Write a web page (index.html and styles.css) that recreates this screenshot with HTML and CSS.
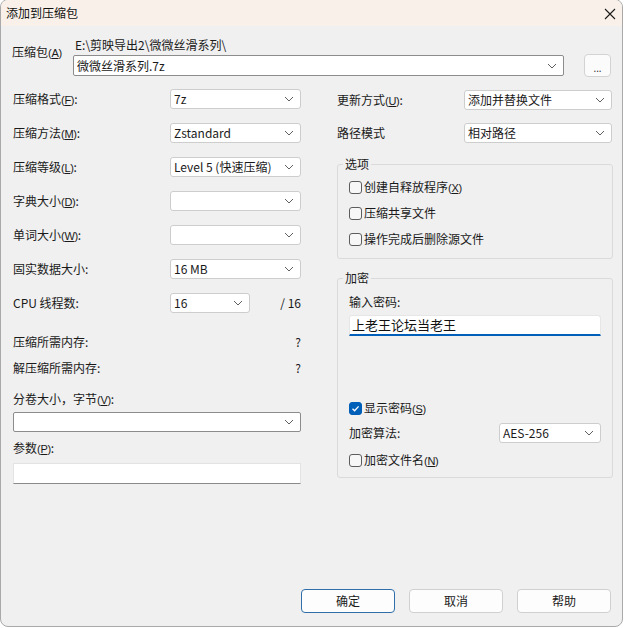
FILE: index.html
```html
<!DOCTYPE html>
<html lang="zh">
<head>
<meta charset="utf-8">
<title>添加到压缩包</title>
<link rel="stylesheet" href="styles.css">
</head>
<body>
<div class="window">
  <div class="titlebar">
    <span class="title">添加到压缩包</span>
    <svg class="close" width="12" height="12" viewBox="0 0 12 12"><path d="M1 1L11 11M11 1L1 11" stroke="#1a1a1a" stroke-width="1.1" fill="none"/></svg>
  </div>
  <div class="content">
    <div class="archive">
      <div class="archive-label">压缩包<span class="mn">(<u>A</u>)</span></div>
      <div class="archive-main">
        <div class="path">E:\剪映导出2\微微丝滑系列\</div>
        <div class="archive-line">
          <div class="combo combo-edit combo-wide"><span>微微丝滑系列.7z</span><svg class="chev" width="10" height="6" viewBox="0 0 10 6"><polyline points="1,1 5,5 9,1"/></svg></div>
          <button class="btn-browse">...</button>
        </div>
      </div>
    </div>

    <div class="columns">
      <div class="col-left">
        <div class="fields">
          <div class="field"><span class="lbl">压缩格式<span class="mn">(<u>F</u>)</span>:</span><div class="combo combo-l"><span>7z</span><svg class="chev" width="10" height="6" viewBox="0 0 10 6"><polyline points="1,1 5,5 9,1"/></svg></div></div>
          <div class="field"><span class="lbl">压缩方法<span class="mn">(<u>M</u>)</span>:</span><div class="combo combo-l"><span>Zstandard</span><svg class="chev" width="10" height="6" viewBox="0 0 10 6"><polyline points="1,1 5,5 9,1"/></svg></div></div>
          <div class="field"><span class="lbl">压缩等级<span class="mn">(<u>L</u>)</span>:</span><div class="combo combo-l"><span>Level 5 (快速压缩)</span><svg class="chev" width="10" height="6" viewBox="0 0 10 6"><polyline points="1,1 5,5 9,1"/></svg></div></div>
          <div class="field"><span class="lbl">字典大小<span class="mn">(<u>D</u>)</span>:</span><div class="combo combo-l"><span></span><svg class="chev" width="10" height="6" viewBox="0 0 10 6"><polyline points="1,1 5,5 9,1"/></svg></div></div>
          <div class="field"><span class="lbl">单词大小<span class="mn">(<u>W</u>)</span>:</span><div class="combo combo-l"><span></span><svg class="chev" width="10" height="6" viewBox="0 0 10 6"><polyline points="1,1 5,5 9,1"/></svg></div></div>
          <div class="field"><span class="lbl">固实数据大小:</span><div class="combo combo-l"><span>16 MB</span><svg class="chev" width="10" height="6" viewBox="0 0 10 6"><polyline points="1,1 5,5 9,1"/></svg></div></div>
          <div class="field"><span class="lbl">CPU 线程数:</span><div class="combo combo-cpu"><span>16</span><svg class="chev" width="10" height="6" viewBox="0 0 10 6"><polyline points="1,1 5,5 9,1"/></svg></div><span class="threads">/ 16</span></div>
        </div>
        <div class="info info-first"><span>压缩所需内存:</span><span>?</span></div>
        <div class="info info-second"><span>解压缩所需内存:</span><span>?</span></div>
        <div class="line-label split-label">分卷大小，字节<span class="mn">(<u>V</u>)</span>:</div>
        <div class="combo combo-edit combo-split"><span></span><svg class="chev" width="10" height="6" viewBox="0 0 10 6"><polyline points="1,1 5,5 9,1"/></svg></div>
        <div class="line-label param-label">参数<span class="mn">(<u>P</u>)</span>:</div>
        <div class="textbox"></div>
      </div>

      <div class="col-right">
        <div class="field field-r"><span class="lbl">更新方式<span class="mn">(<u>U</u>)</span>:</span><div class="combo combo-r"><span>添加并替换文件</span><svg class="chev" width="10" height="6" viewBox="0 0 10 6"><polyline points="1,1 5,5 9,1"/></svg></div></div>
        <div class="field field-r field-r2"><span class="lbl">路径模式</span><div class="combo combo-r"><span>相对路径</span><svg class="chev" width="10" height="6" viewBox="0 0 10 6"><polyline points="1,1 5,5 9,1"/></svg></div></div>

        <fieldset class="group group-options">
          <legend>选项</legend>
          <div class="checks">
            <label class="check"><span class="cb"></span><span>创建自释放程序<span class="mn">(<u>X</u>)</span></span></label>
            <label class="check"><span class="cb"></span><span>压缩共享文件</span></label>
            <label class="check"><span class="cb"></span><span>操作完成后删除源文件</span></label>
          </div>
        </fieldset>

        <fieldset class="group group-enc">
          <legend>加密</legend>
          <div class="pw-label">输入密码:</div>
          <div class="pwbox">上老王论坛当老王</div>
          <label class="check show-pw"><span class="cb cb-on"><svg width="11" height="11" viewBox="0 0 11 11"><polyline points="2.5,5.8 4.6,7.8 8.6,3.4" fill="none" stroke="#fff" stroke-width="1.3"/></svg></span><span>显示密码<span class="mn">(<u>S</u>)</span></span></label>
          <div class="field algo"><span class="lbl">加密算法:</span><div class="combo combo-algo"><span>AES-256</span><svg class="chev" width="10" height="6" viewBox="0 0 10 6"><polyline points="1,1 5,5 9,1"/></svg></div></div>
          <label class="check enc-names"><span class="cb"></span><span>加密文件名<span class="mn">(<u>N</u>)</span></span></label>
        </fieldset>
      </div>
    </div>

    <div class="buttons">
      <button class="btn btn-default">确定</button>
      <button class="btn">取消</button>
      <button class="btn">帮助</button>
    </div>
  </div>
</div>
</body>
</html>
```

FILE: styles.css
```css
html, body {
  margin: 0;
  padding: 0;
  background: #ffffff;
}
body {
  font-family: "Noto Sans CJK SC", "Noto Sans", sans-serif;
  font-size: 12px;
  line-height: 16px;
  color: #1a1a1a;
}
.window {
  box-sizing: border-box;
  width: 623px;
  height: 628px;
  margin-top: -1px;
  border: 1px solid #a9a9a9;
  border-radius: 8px;
  background: #f0f0f0;
  display: flex;
  flex-direction: column;
  overflow: hidden;
}
.titlebar {
  height: 26px;
  flex: none;
  background: #f9f1e9;
  display: flex;
  align-items: center;
  justify-content: space-between;
  padding: 0 6px 0 5px;
}
.title {
  font-size: 12px;
  color: #111;
}
.close {
  display: block;
  margin-top: 1px;
}
.content {
  flex: 1;
  display: flex;
  flex-direction: column;
  padding: 0 9px 13px 11px;
}
.mn {
  font-family: "Liberation Sans Narrow", "Liberation Sans", sans-serif;
  font-size: 11px;
  letter-spacing: -0.3px;
}
.mn u {
  text-decoration-thickness: 1px;
  text-underline-offset: 1px;
}

/* archive row */
.archive {
  display: flex;
}
.archive-label {
  width: 61px;
  flex: none;
  margin-top: 18px;
}
.archive-main {
  flex: 1;
  padding-top: 11px;
}
.path {
  height: 16px;
  padding-left: 2px;
}
.archive-line {
  display: flex;
  align-items: center;
  gap: 20px;
  height: 23px;
  margin-top: 1px;
}
.combo {
  box-sizing: border-box;
  height: 20px;
  background: #ffffff;
  border: 1px solid #cdcdcd;
  border-radius: 3px;
  display: flex;
  align-items: center;
  justify-content: space-between;
  padding: 0 6px 0 3px;
  white-space: nowrap;
}
.combo span {
  line-height: 16px;
}
.chev {
  flex: none;
  display: block;
}
.chev polyline {
  fill: none;
  stroke: #606060;
  stroke-width: 1;
}
.combo-edit {
  border-color: #8c8c8c;
  border-radius: 2px;
}
.combo-wide {
  flex: 1;
  height: 21px;
}
.btn-browse {
  box-sizing: border-box;
  width: 27px;
  height: 23px;
  margin-right: 2px;
  border: 1px solid #d3d3d3;
  border-radius: 4px;
  background: #fbfbfb;
  font-family: "Noto Sans", sans-serif;
  font-size: 10px;
  line-height: 14px;
  padding: 4px 0 0;
  color: #333;
}

/* columns */
.columns {
  display: grid;
  grid-template-columns: 289px 276px;
  column-gap: 36px;
  margin-top: 12px;
}
.col-left {
  display: flex;
  flex-direction: column;
}
.fields {
  display: flex;
  flex-direction: column;
  gap: 14px;
}
.field {
  display: flex;
  align-items: center;
  height: 20px;
}
.lbl {
  flex: 1;
  white-space: nowrap;
}
.col-left .lbl {
  padding-left: 1px;
}
.combo-l {
  width: 131px;
}
.combo-cpu {
  width: 80px;
}
.col-left .lbl {
  width: 157px;
  flex: none;
}
.threads {
  flex: 1;
  text-align: right;
}
.info {
  display: flex;
  justify-content: space-between;
  padding: 0 0 0 1px;
  height: 16px;
}
.info-first {
  margin-top: 21px;
}
.info-second {
  margin-top: 10px;
}
.line-label {
  height: 16px;
  padding-left: 1px;
}
.split-label {
  margin-top: 15px;
}
.combo-split {
  margin-top: 5px;
  margin-left: 1px;
}
.param-label {
  margin-top: 8px;
}
.textbox {
  box-sizing: border-box;
  margin-top: 7px;
  margin-left: 1px;
  height: 21px;
  background: #ffffff;
  border: 1px solid #e3e3e3;
  border-bottom-color: #8a8a8a;
}

/* right column */
.col-right {
  display: flex;
  flex-direction: column;
  padding-top: 1px;
}
.field-r2 {
  margin-top: 13px;
}
.combo-r {
  width: 148px;
  margin-right: 1px;
}
.group {
  margin: 13px 0 0;
  padding: 6px 11px 10px 11px;
  border: 1px solid #dadada;
  border-radius: 3px;
  min-inline-size: 0;
}
.group legend {
  padding: 0 2px;
  margin-left: -6px;
  line-height: 16px;
}
.checks {
  display: flex;
  flex-direction: column;
  gap: 8px;
}
.check {
  display: flex;
  align-items: center;
  gap: 2px;
  height: 18px;
  white-space: nowrap;
}
.cb {
  box-sizing: border-box;
  width: 13px;
  height: 13px;
  flex: none;
  border: 1px solid #5d5d5d;
  border-radius: 3px;
  background: #f7f7f7;
  display: flex;
  align-items: center;
  justify-content: center;
}
.cb-on {
  background: #005fb8;
  border-color: #005fb8;
}
.cb-on svg {
  display: block;
}
.group-enc {
  margin-top: 11px;
  padding-top: 8px;
  padding-bottom: 8px;
}
.pw-label {
  height: 16px;
}
.pwbox {
  box-sizing: border-box;
  margin-top: 5px;
  height: 21px;
  background: #ffffff;
  border: 1px solid #e6e6e6;
  border-bottom: 2px solid #005fb8;
  border-radius: 3px 3px 0 0;
  font-size: 13px;
  line-height: 18px;
  padding-left: 2px;
  color: #111;
}
.show-pw {
  margin-top: 63px;
}
.algo {
  margin-top: 6px;
}
.combo-algo {
  width: 102px;
}
.enc-names {
  margin-top: 8px;
}

/* buttons */
.buttons {
  margin-top: auto;
  display: flex;
  justify-content: flex-end;
  gap: 14px;
  padding-right: 2px;
}
.btn {
  box-sizing: border-box;
  width: 94px;
  height: 24px;
  border: 1px solid #d0d0d0;
  border-radius: 4px;
  background: #fdfdfd;
  font-family: "Noto Sans CJK SC", sans-serif;
  font-size: 12px;
  line-height: 16px;
  color: #1a1a1a;
  padding: 0;
}
.btn-default {
  border-color: #2f6ea8;
}
```
